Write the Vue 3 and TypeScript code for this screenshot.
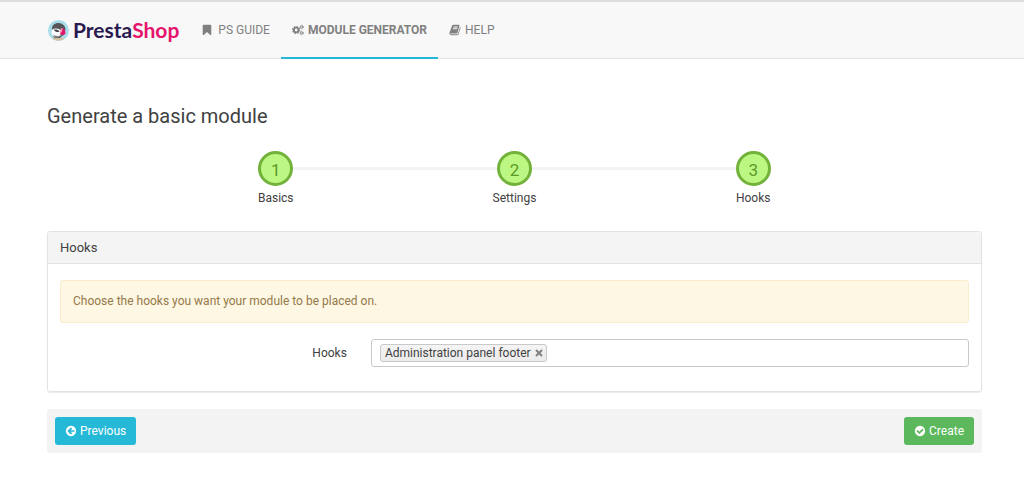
<script setup lang="ts">
import { ref } from 'vue'

interface Step {
  number: number
  label: string
}

const steps: Step[] = [
  { number: 1, label: 'Basics' },
  { number: 2, label: 'Settings' },
  { number: 3, label: 'Hooks' },
]

const hooks = ref<string[]>(['Administration panel footer'])
const query = ref('')

function removeHook(hook: string): void {
  hooks.value = hooks.value.filter((item) => item !== hook)
}
</script>

<template>
  <header class="topbar">
    <a class="brand" href="#" aria-label="PrestaShop">
      <svg class="mascot" viewBox="0 0 42 42" aria-hidden="true">
        <circle cx="21" cy="21" r="21" fill="#a9dcea" />
        <path d="M8 20C7 11 13 6 21 6s14 6 14 13l-3 9-8 8H13C9 33 8 26 8 20z" fill="#55545a" />
        <path d="M7 24c0-6 5-8 10-7 7 1 10 4 10 9s-4 8-10 8S7 31 7 24z" fill="#fff" />
        <path d="M11 20c4-2 9-1 12 3-3 2-8 1-9-1z" fill="#4a484e" />
        <path d="M10 29c5 3 10 4 15 1l-4 5h-7z" fill="#8b8a8e" />
        <path d="M29 16c4 2 6 6 6 11l-4 4-3-3-4 2 1-8z" fill="#e5146c" />
        <path d="M26 17l3-1-1 7-3 3-2-3z" fill="#f5a3bd" />
        <path d="M9 35c7 2 16 2 24 0l-3 4c-5 3-13 3-18 0z" fill="#d8bd9b" />
      </svg>
      <span class="wordmark">Presta<span class="shop">Shop</span></span>
    </a>
    <nav class="nav">
      <a class="nav-item" href="#">
        <svg class="icon bookmark" viewBox="0 0 1792 1792" aria-hidden="true">
          <path d="M1420 128q23 0 44 9 33 13 52.500 41t19.500 62v1289q0 34-19.500 62t-52.500 41q-19 8-44 8-48 0-83-32l-441-424-441 424q-36 33-83 33-23 0-44-9-33-13-52.500-41t-19.500-62v-1289q0-34 19.500-62t52.500-41q21-9 44-9h1048z" />
        </svg>
        PS GUIDE
      </a>
      <a class="nav-item active" href="#" aria-current="page">
        <svg class="icon" viewBox="0 0 26 24" aria-hidden="true">
          <g fill="none" stroke="currentColor">
            <circle cx="9" cy="12" r="5" stroke-width="4" />
            <circle cx="9" cy="12" r="7.600" stroke-width="2.600" stroke-dasharray="3 2.970" />
            <circle cx="21" cy="5.500" r="2.500" stroke-width="2" />
            <circle cx="21" cy="5.500" r="4" stroke-width="1.600" stroke-dasharray="2 2.190" />
            <circle cx="21" cy="18.500" r="2.500" stroke-width="2" />
            <circle cx="21" cy="18.500" r="4" stroke-width="1.600" stroke-dasharray="2 2.190" />
          </g>
        </svg>
        MODULE GENERATOR
      </a>
      <a class="nav-item" href="#">
        <svg class="icon" viewBox="0 0 1792 1792" aria-hidden="true">
          <path d="M1703 478q40 57 18 129l-275 906q-19 64-76.500 107.500t-122.500 43.500h-923q-77 0-148.500-53.500t-99.500-131.500q-24-67-2-127 0-4 3-27t4-37q1-8-3-21.500t-3-19.500q2-11 8-21t16.500-23.500 16.500-23.500q23-38 45-91.500t30-91.500q3-10 .5-30t-.5-28q3-11 17-28t17-23q21-36 42-92t25-90q1-9-2.500-32t.5-28q4-13 22-30.500t22-22.500q19-26 42.500-84.500t27.500-96.500q1-8-3-25.500t-2-26.500q2-8 9-18t18-23 17-21q8-12 16.500-30.500t15-35 16-36 19.500-32 26.500-23.500 36-11.500 47.500 5.500l-1 3q38-9 51-9h761q74 0 114 56t18 130l-274 906q-36 119-71.500 153.500t-128.500 34.500h-869q-27 0-38 15-11 16-1 43 24 70 144 70h923q29 0 56-15.500t35-41.500l300-987q7-22 5-57 38 15 59 43zm-1064 2q-4 13 2 22.500t20 9.500h608q13 0 25.500-9.500t16.500-22.500l21-64q4-13-2-22.500t-20-9.500h-608q-13 0-25.500 9.500t-16.500 22.500zm-83 256q-4 13 2 22.500t20 9.500h608q13 0 25.500-9.500t16.500-22.500l21-64q4-13-2-22.500t-20-9.500h-608q-13 0-25.500 9.500t-16.500 22.500z" />
        </svg>
        HELP
      </a>
    </nav>
  </header>

  <main class="page">
    <h1 class="title">Generate a basic module</h1>

    <ol class="steps">
      <li v-for="step in steps" :key="step.number" class="step">
        <span class="track"><span class="bubble">{{ step.number }}</span></span>
        <span class="step-label">{{ step.label }}</span>
      </li>
    </ol>

    <section class="panel">
      <h2 class="panel-title">Hooks</h2>
      <div class="panel-body">
        <p class="notice">Choose the hooks you want your module to be placed on.</p>
        <div class="field">
          <label class="field-label" for="hooks">Hooks</label>
          <div class="tags">
            <span v-for="hook in hooks" :key="hook" class="tag">
              {{ hook }}
              <button class="remove" type="button" :aria-label="'Remove ' + hook" @click="removeHook(hook)">
                <svg class="cross" viewBox="0 0 8 8" aria-hidden="true">
                  <path d="M1 1l6 6M7 1L1 7" fill="none" stroke="currentColor" stroke-width="2" />
                </svg>
              </button>
            </span>
            <input id="hooks" v-model="query" class="tag-input" type="text" />
          </div>
        </div>
      </div>
    </section>

    <footer class="actions">
      <button class="btn previous" type="button">
        <svg class="icon" viewBox="0 0 1792 1792" aria-hidden="true">
          <path d="M1408 960v-128q0-26-19-45t-45-19h-502l189-189q19-19 19-45t-19-45l-91-91q-18-18-45-18t-45 18l-362 362-91 91q-18 18-18 45t18 45l91 91 362 362q18 18 45 18t45-18l91-91q18-18 18-45t-18-45l-189-189h502q26 0 45-19t19-45zm256-64q0 209-103 385.500t-279.500 279.500-385.500 103-385.500-103-279.500-279.500-103-385.500 103-385.500 279.500-279.500 385.500-103 385.500 103 279.500 279.500 103 385.500z" />
        </svg>
        Previous
      </button>
      <button class="btn create" type="button">
        <svg class="icon" viewBox="0 0 1792 1792" aria-hidden="true">
          <path d="M1412 734q0-28-18-46l-91-90q-19-19-45-19t-45 19l-408 407-226-226q-19-19-45-19t-45 19l-91 90q-18 18-18 46 0 27 18 45l362 362q19 19 45 19 27 0 46-19l543-543q18-18 18-45zm252 162q0 209-103 385.500t-279.500 279.500-385.500 103-385.500-103-279.500-279.500-103-385.500 103-385.500 279.500-279.500 385.500-103 385.500 103 279.500 279.500 103 385.500z" />
        </svg>
        Create
      </button>
    </footer>
  </main>
</template>

<style>
body {
  margin: 0;
  background: #fff;
  color: #414141;
  font-family: Roboto, "Liberation Sans", sans-serif;
  font-size: 12px;
  line-height: 18px;
}
</style>

<style scoped>
.topbar {
  display: flex;
  align-items: stretch;
  box-sizing: border-box;
  height: 59px;
  padding-left: 48px;
  background: #f8f8f8;
  border-top: 2px solid #dedede;
  border-bottom: 1px solid #e3e3e3;
}

.brand {
  display: flex;
  align-items: center;
  gap: 4px;
  margin-right: 11px;
  text-decoration: none;
}

.mascot {
  width: 21px;
  height: 21px;
}

.wordmark {
  color: #2b1a50;
  font-family: Lato, sans-serif;
  font-size: 21px;
  font-weight: 700;
  line-height: 28px;
}

.shop {
  color: #e5146c;
}

.nav {
  display: flex;
  margin-bottom: -1px;
}

.nav-item {
  display: flex;
  align-items: center;
  gap: 4px;
  padding: 0 11px;
  border-bottom: 2px solid transparent;
  color: #808080;
  text-decoration: none;
}

.nav-item.active {
  border-bottom-color: #25b9d7;
  font-weight: 700;
}

.icon {
  flex: none;
  width: 12px;
  height: 12px;
  fill: currentColor;
}

.bookmark {
  margin-right: 1px;
}

.page {
  padding: 43px 42px 46px 47px;
}

.title {
  margin: 0;
  font-size: 20px;
  font-weight: 400;
  line-height: 28px;
}

.steps {
  display: flex;
  margin: 21px 0 24px;
  padding: 0 11.7%;
  list-style: none;
}

.step {
  flex: 1;
  text-align: center;
}

.track {
  display: flex;
  align-items: center;
}

.track::before,
.track::after {
  content: "";
  flex: 1;
  height: 3px;
  background: #f3f3f3;
}

.step:first-child .track::before,
.step:last-child .track::after {
  background: transparent;
}

.bubble {
  box-sizing: border-box;
  width: 35px;
  height: 35px;
  border: 3px solid #72b13a;
  border-radius: 50%;
  background: #bbf782;
  color: #5a9a28;
  font-size: 17px;
  line-height: 32px;
}

.step-label {
  display: block;
  margin-top: 3px;
}

.panel {
  border: 1px solid #e3e3e3;
  border-radius: 3px;
  box-shadow: 0 1px 1px #ececec;
}

.panel-title {
  margin: 0;
  padding: 7px 12px 6px;
  border-bottom: 1px solid #e3e3e3;
  background: #f4f4f4;
  font-size: 13px;
  font-weight: 400;
  line-height: 18px;
}

.panel-body {
  padding: 16px 12px 24px;
}

.notice {
  margin: 0 0 16px;
  padding: 12px;
  border: 1px solid #faebcc;
  border-radius: 3px;
  background: #fdf7e3;
  color: #95794a;
  line-height: 17px;
}

.field {
  display: flex;
  align-items: center;
}

.field-label {
  box-sizing: border-box;
  width: 34.2%;
  padding-right: 24px;
  text-align: right;
}

.tags {
  display: flex;
  flex: 1;
  align-items: center;
  box-sizing: border-box;
  height: 28px;
  padding: 0 8px;
  border: 1px solid #c8c8c8;
  border-radius: 3px;
}

.tag {
  display: flex;
  align-items: center;
  gap: 4px;
  box-sizing: border-box;
  height: 18px;
  padding: 0 3px 0 4px;
  border: 1px solid #c9c9c9;
  border-radius: 3px;
  background: linear-gradient(#f4f4f4, #ebebeb);
  white-space: nowrap;
}

.remove {
  display: flex;
  padding: 0;
  border: 0;
  background: none;
  color: #808080;
}

.cross {
  width: 8px;
  height: 8px;
}

.tag-input {
  flex: 1;
  min-width: 20px;
  padding: 0 4px;
  border: 0;
  outline: 0;
  background: transparent;
  font: inherit;
}

.actions {
  display: flex;
  justify-content: space-between;
  margin-top: 17px;
  padding: 8px;
  border-radius: 3px;
  background: #f3f3f3;
}

.btn {
  display: flex;
  align-items: center;
  gap: 3px;
  height: 28px;
  padding: 0 10px;
  border: 0;
  border-radius: 3px;
  color: #fff;
  font: inherit;
}

.previous {
  background: #25b9d7;
}

.create {
  background: #5cb85c;
}
</style>
